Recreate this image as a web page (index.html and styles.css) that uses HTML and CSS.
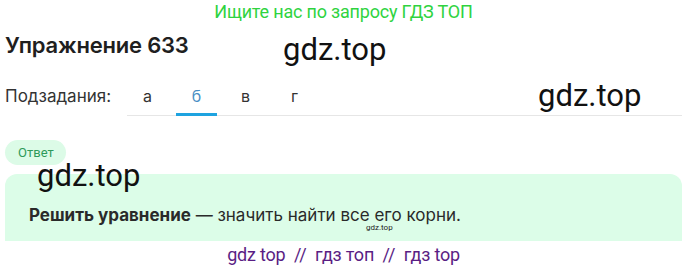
FILE: index.html
```html
<!DOCTYPE html>
<html lang="ru">
<head>
  <meta charset="UTF-8">
  <title>Упражнение 633</title>
  <link rel="stylesheet" href="styles.css">
</head>
<body>
<div class="page">
  <div class="banner">Ищите нас по запросу ГДЗ ТОП</div>

  <h1 class="title">Упражнение 633</h1>

  <div class="subtasks">
    <span class="subtasks-label">Подзадания:</span>
    <nav class="tabs">
      <a class="tab">а</a>
      <a class="tab active">б</a>
      <a class="tab">в</a>
      <a class="tab">г</a>
    </nav>
  </div>

  <div class="answer">
    <span class="answer-badge">Ответ</span>
    <div class="answer-card">
      <p><b>Решить уравнение</b> — значить найти все его корни.</p>
    </div>
  </div>

  <div class="footer-links">gdz top &nbsp;//&nbsp; гдз топ &nbsp;//&nbsp; гдз top</div>

  <!-- watermarks -->
  <span class="wm wm-head">gdz.top</span>
  <span class="wm wm-tabs">gdz.top</span>
  <span class="wm wm-card">gdz.top</span>
  <span class="wm-small">gdz.top</span>
</div>
</body>
</html>
```

FILE: styles.css
```css
html, body {
  margin: 0;
  padding: 0;
  background: #fff;
  font-family: Inter, Roboto, sans-serif;
  color: #222;
}
.page {
  position: relative;
  padding: 0 0 0 5px;
  height: 268px;
  overflow: hidden;
}
.banner {
  text-align: center;
  font-family: Roboto, sans-serif;
  font-size: 18px;
  line-height: 24px;
  color: #2fd33f;
  letter-spacing: -0.2px;
}
.title {
  margin: 7px 0 0 0;
  font-size: 22px;
  line-height: 28px;
  font-weight: 600;
  color: #1f1f1f;
  letter-spacing: -0.2px;
}
.subtasks {
  display: flex;
  margin-top: 19px;
  height: 38px;
}
.subtasks-label {
  font-size: 17px;
  line-height: 24px;
  color: #333;
  width: 122px;
  padding-top: 6px;
}
.tabs {
  display: flex;
  flex: 1;
  border-bottom: 1px solid #e6e6e6;
}
.tab {
  box-sizing: border-box;
  width: 41px;
  margin-right: 8px;
  padding-top: 6px;
  text-align: center;
  font-size: 16px;
  line-height: 24px;
  color: #333;
}
.tab.active {
  color: #4a8fc4;
  border-bottom: 3px solid #1ea3e0;
  margin-bottom: -1px;
}
.answer {
  margin-top: 24px;
}
.answer-badge {
  display: inline-block;
  padding: 0 12px 0 13px;
  height: 25px;
  line-height: 25px;
  border-radius: 13px;
  background: #dcfbe7;
  color: #2e9a5a;
  font-family: Roboto, sans-serif;
  font-size: 13px;
}
.answer-card {
  margin-top: 9px;
  height: 67px;
  background: #dcfde8;
  border-radius: 12px 12px 0 0;
  box-sizing: border-box;
  padding-top: 31px;
}
.answer-card p {
  margin: 0 0 0 24px;
  font-size: 17px;
  line-height: 20px;
  color: #2a2a2a;
}
.answer-card b {
  font-weight: 700;
}
.footer-links {
  margin-top: 3px;
  text-align: center;
  font-family: Roboto, sans-serif;
  font-size: 18px;
  line-height: 22px;
  color: #5a1e84;
  letter-spacing: -0.2px;
}
.wm {
  position: absolute;
  font-family: Roboto, sans-serif;
  font-size: 31px;
  line-height: 36px;
  color: #111;
}
.wm-head { left: 283px; top: 32px; }
.wm-tabs { left: 538px; top: 78px; }
.wm-card { left: 37px; top: 158px; }
.wm-small {
  position: absolute;
  left: 366px;
  top: 223px;
  font-family: Roboto, sans-serif;
  font-size: 8px;
  color: #222;
}
```
